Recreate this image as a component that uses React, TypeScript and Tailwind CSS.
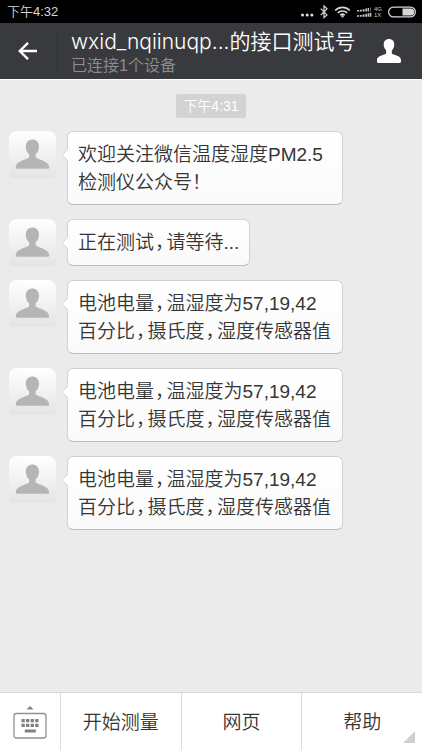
import clsx from 'clsx'

const messages = [
  { id: 1, lines: ['欢迎关注微信温度湿度PM2.5', '检测仪公众号！'] },
  { id: 2, lines: ['正在测试，请等待...'] },
  { id: 3, lines: ['电池电量，温湿度为57,19,42', '百分比，摄氏度，湿度传感器值'] },
  { id: 4, lines: ['电池电量，温湿度为57,19,42', '百分比，摄氏度，湿度传感器值'] },
  { id: 5, lines: ['电池电量，温湿度为57,19,42', '百分比，摄氏度，湿度传感器值'] },
]

const menuItems = ['开始测量', '网页', '帮助']

function BackIcon() {
  return (
    <svg viewBox="0 0 20 20" className="h-5 w-5" fill="none" stroke="currentColor" strokeWidth="2.4">
      <path d="M19 10H2.5M10 1.8 1.8 10l8.2 8.2" />
    </svg>
  )
}

function ProfileIcon() {
  return (
    <svg viewBox="0 0 24 24" className="h-6 w-6" fill="currentColor">
      <path d="M12 0c3.300 0 5.300 2.200 5.300 5.600 0 2.400-1 4.500-2.500 6v2.200c0 1 .8 1.400 2 1.800 3.700 1.200 7.200 2.300 7.200 5.700v1.300c0 .9-.4 1.400-1.300 1.400H1.300C.4 24 0 23.500 0 22.600v-1.300c0-3.400 3.500-4.500 7.200-5.700 1.200-.4 2-.8 2-1.800v-2.200c-1.500-1.500-2.500-3.600-2.500-6C6.700 2.200 8.700 0 12 0z" />
    </svg>
  )
}

function Avatar() {
  return (
    <div className="h-[47px] w-[47px] shrink-0 rounded-t-lg rounded-b-sm bg-gradient-to-b from-white to-[#e4e4e4]">
      <svg viewBox="0 0 47 47" className="h-full w-full" fill="#b5b5b5">
        <path d="M23.400 8.500c4.100 0 6.600 3 6.600 7.300 0 3.200-1.400 6.100-3.400 7.700v1.700c0 1.500 1.100 2.200 3.200 2.900 5.500 1.900 10.300 4.200 10.300 8.200 0 1.100-.4 1.500-1.300 1.500H8.100c-.9 0-1.300-.4-1.300-1.500 0-4 4.800-6.300 10.200-8.200 2.100-.7 3.200-1.400 3.200-2.900v-1.700c-2-1.600-3.400-4.500-3.400-7.700 0-4.300 2.500-7.300 6.600-7.300z" />
      </svg>
    </div>
  )
}

function StatusIcons() {
  return (
    <svg viewBox="0 0 122 23" className="h-[23px] w-[122px]" fill="none" stroke="#d6d6d6">
      <g fill="#e0e0e0" stroke="none">
        <circle cx="2.500" cy="15" r="1.500" />
        <circle cx="7.200" cy="15" r="1.500" />
        <circle cx="11.900" cy="15" r="1.500" />
      </g>
      <path d="m20.800 8.700 6.200 6.200-3 2.800V6l3 2.800-6.200 6.200" strokeWidth="1.200" />
      <g strokeWidth="1.600">
        <path d="M35.200 10.500a10 10 0 0 1 14.600 0M37.800 12.900a6.600 6.600 0 0 1 9.400 0M40.200 15.200a3.300 3.300 0 0 1 4.600 0" />
        <circle cx="42.500" cy="16.300" r=".5" />
      </g>
      <g fill="#c8c8c8" stroke="none">
        <path d="M57 10h2v1.500h-2zM59.800 9.700h2v1.800h-2zM62.600 9.200h2v2.300h-2zM65.400 8.600h1.600v2.900h-1.600zM67.600 8h1.400v3.500h-1.400z" />
        <path d="M57 15.200h2v1.500h-2zM59.800 14.900h2v1.800h-2zM62.600 14.400h2v2.300h-2zM65.400 13.800h1.800v2.900h-1.800zM67.800 13.300h1.500v3.400h-1.500zM69.900 12.800h1.400v3.900h-1.400z" />
        <path d="M70 7.500h1v4h-1z" fill="#666" />
      </g>
      <g fill="#c8c8c8" stroke="none" fontFamily="Liberation Sans, sans-serif" fontSize="6">
        <text x="74" y="11">4G</text>
        <text x="74" y="17">1X</text>
      </g>
      <rect x="88.600" y="7.100" width="26.800" height="9.800" rx="4.900" strokeWidth="1.200" />
      <path d="M102.500 8.500h8.200a3.500 3.500 0 0 1 0 7h-8.200z" fill="#d6d6d6" stroke="none" />
    </svg>
  )
}

// Commas take a half-width glyph with a little room on both sides
function MessageLine({ text }: { text: string }) {
  return (
    <p className="whitespace-nowrap">
      {text.split(/(，)/).map((part, index) =>
        part === '，' ? (
          <span key={index} className="pr-0.5 pl-px [font-feature-settings:'halt']">
            {part}
          </span>
        ) : (
          part
        ),
      )}
    </p>
  )
}

export default function App() {
  return (
    <div className="flex min-h-screen flex-col bg-[#ebebeb] font-['Liberation_Sans','Noto_Sans_CJK_SC',sans-serif] font-[350] text-[#353535]">
      <div className="flex h-[23px] items-center justify-between bg-black pl-[7px] text-[13px] text-[#d6d6d6]">
        <span>下午4:32</span>
        <StatusIcons />
      </div>

      <header className="flex h-14 items-center bg-[#393a3e] text-white">
        <button type="button" aria-label="返回" className="flex h-10 w-[57px] items-center justify-center border-r border-[#333438]">
          <BackIcon />
        </button>
        <div className="min-w-0 flex-1 pt-0.5 pl-3.5">
          <h1 className="whitespace-nowrap font-['Inter','Noto_Sans_CJK_SC',sans-serif] text-[21px] leading-7 font-[350]">
            wxid_nqiinuqp...的接口测试号
          </h1>
          <p className="text-base leading-5 text-[#8e8f92]">已连接1个设备</p>
        </div>
        <button type="button" aria-label="资料" className="mr-[21px] shrink-0">
          <ProfileIcon />
        </button>
      </header>

      <main className="flex flex-1 flex-col border-t border-white px-[9px] pt-3.5">
        <time className="self-center rounded-xs bg-[#d3d3d3] px-[7px] text-sm leading-6 text-white">下午4:31</time>

        <ul className="mt-[13px] flex flex-col gap-3.5">
          {messages.map((message) => (
            <li key={message.id} className="flex gap-[11px]">
              <Avatar />
              <div
                className={clsx(
                  'relative rounded-md border border-[#d2d2d2] border-b-[#bcbcbc] bg-gradient-to-b from-white to-[#fafafa] px-2.5 pt-[9px] pb-[7px] text-[19px] leading-7',
                  message.lines.length > 1 && 'w-[276px]',
                )}
              >
                <svg viewBox="0 0 7 12" className="absolute top-[17px] -left-[7px] h-3 w-[7px]">
                  <path d="M7 0 1 6l6 6z" fill="#fff" />
                  <path d="M6.500.5 1 6l5.500 5.500" fill="none" stroke="#d2d2d2" />
                </svg>
                {message.lines.map((line) => (
                  <MessageLine key={line} text={line} />
                ))}
              </div>
            </li>
          ))}
        </ul>
      </main>

      <nav className="relative flex h-[58px] border-t border-[#d6d6d6] bg-white text-[19px]">
        <button type="button" aria-label="切换键盘" className="flex w-[60px] shrink-0 items-center justify-center">
          <svg viewBox="0 0 34 34" className="h-[34px] w-[34px]" fill="#808080">
            <path d="m17 1 3.500 3.500h-7z" />
            <rect x="1" y="8.500" width="32" height="24.500" rx="2.500" fill="none" stroke="#909090" strokeWidth="1.300" />
            <path d="M8.500 14h3.300v3.300H8.500zM13 14h3.300v3.300H13zM17.600 14h3.300v3.300h-3.300zM22.200 14h3.300v3.300h-3.300zM8.500 18.700h3.300V22H8.500zM13 18.700h3.300V22H13zM17.600 18.700h3.300V22h-3.300zM22.200 18.700h3.300V22h-3.300zM11.800 24.500h11v3h-11z" />
          </svg>
        </button>
        {menuItems.map((item) => (
          <button key={item} type="button" className="flex-1 border-l border-[#dcdcdc] pt-1">
            {item}
          </button>
        ))}
        <svg viewBox="0 0 12 12" className="absolute right-[7px] bottom-[7px] h-3 w-3" fill="#d0d0d0">
          <path d="M12 0v12H0z" />
        </svg>
      </nav>
    </div>
  )
}
